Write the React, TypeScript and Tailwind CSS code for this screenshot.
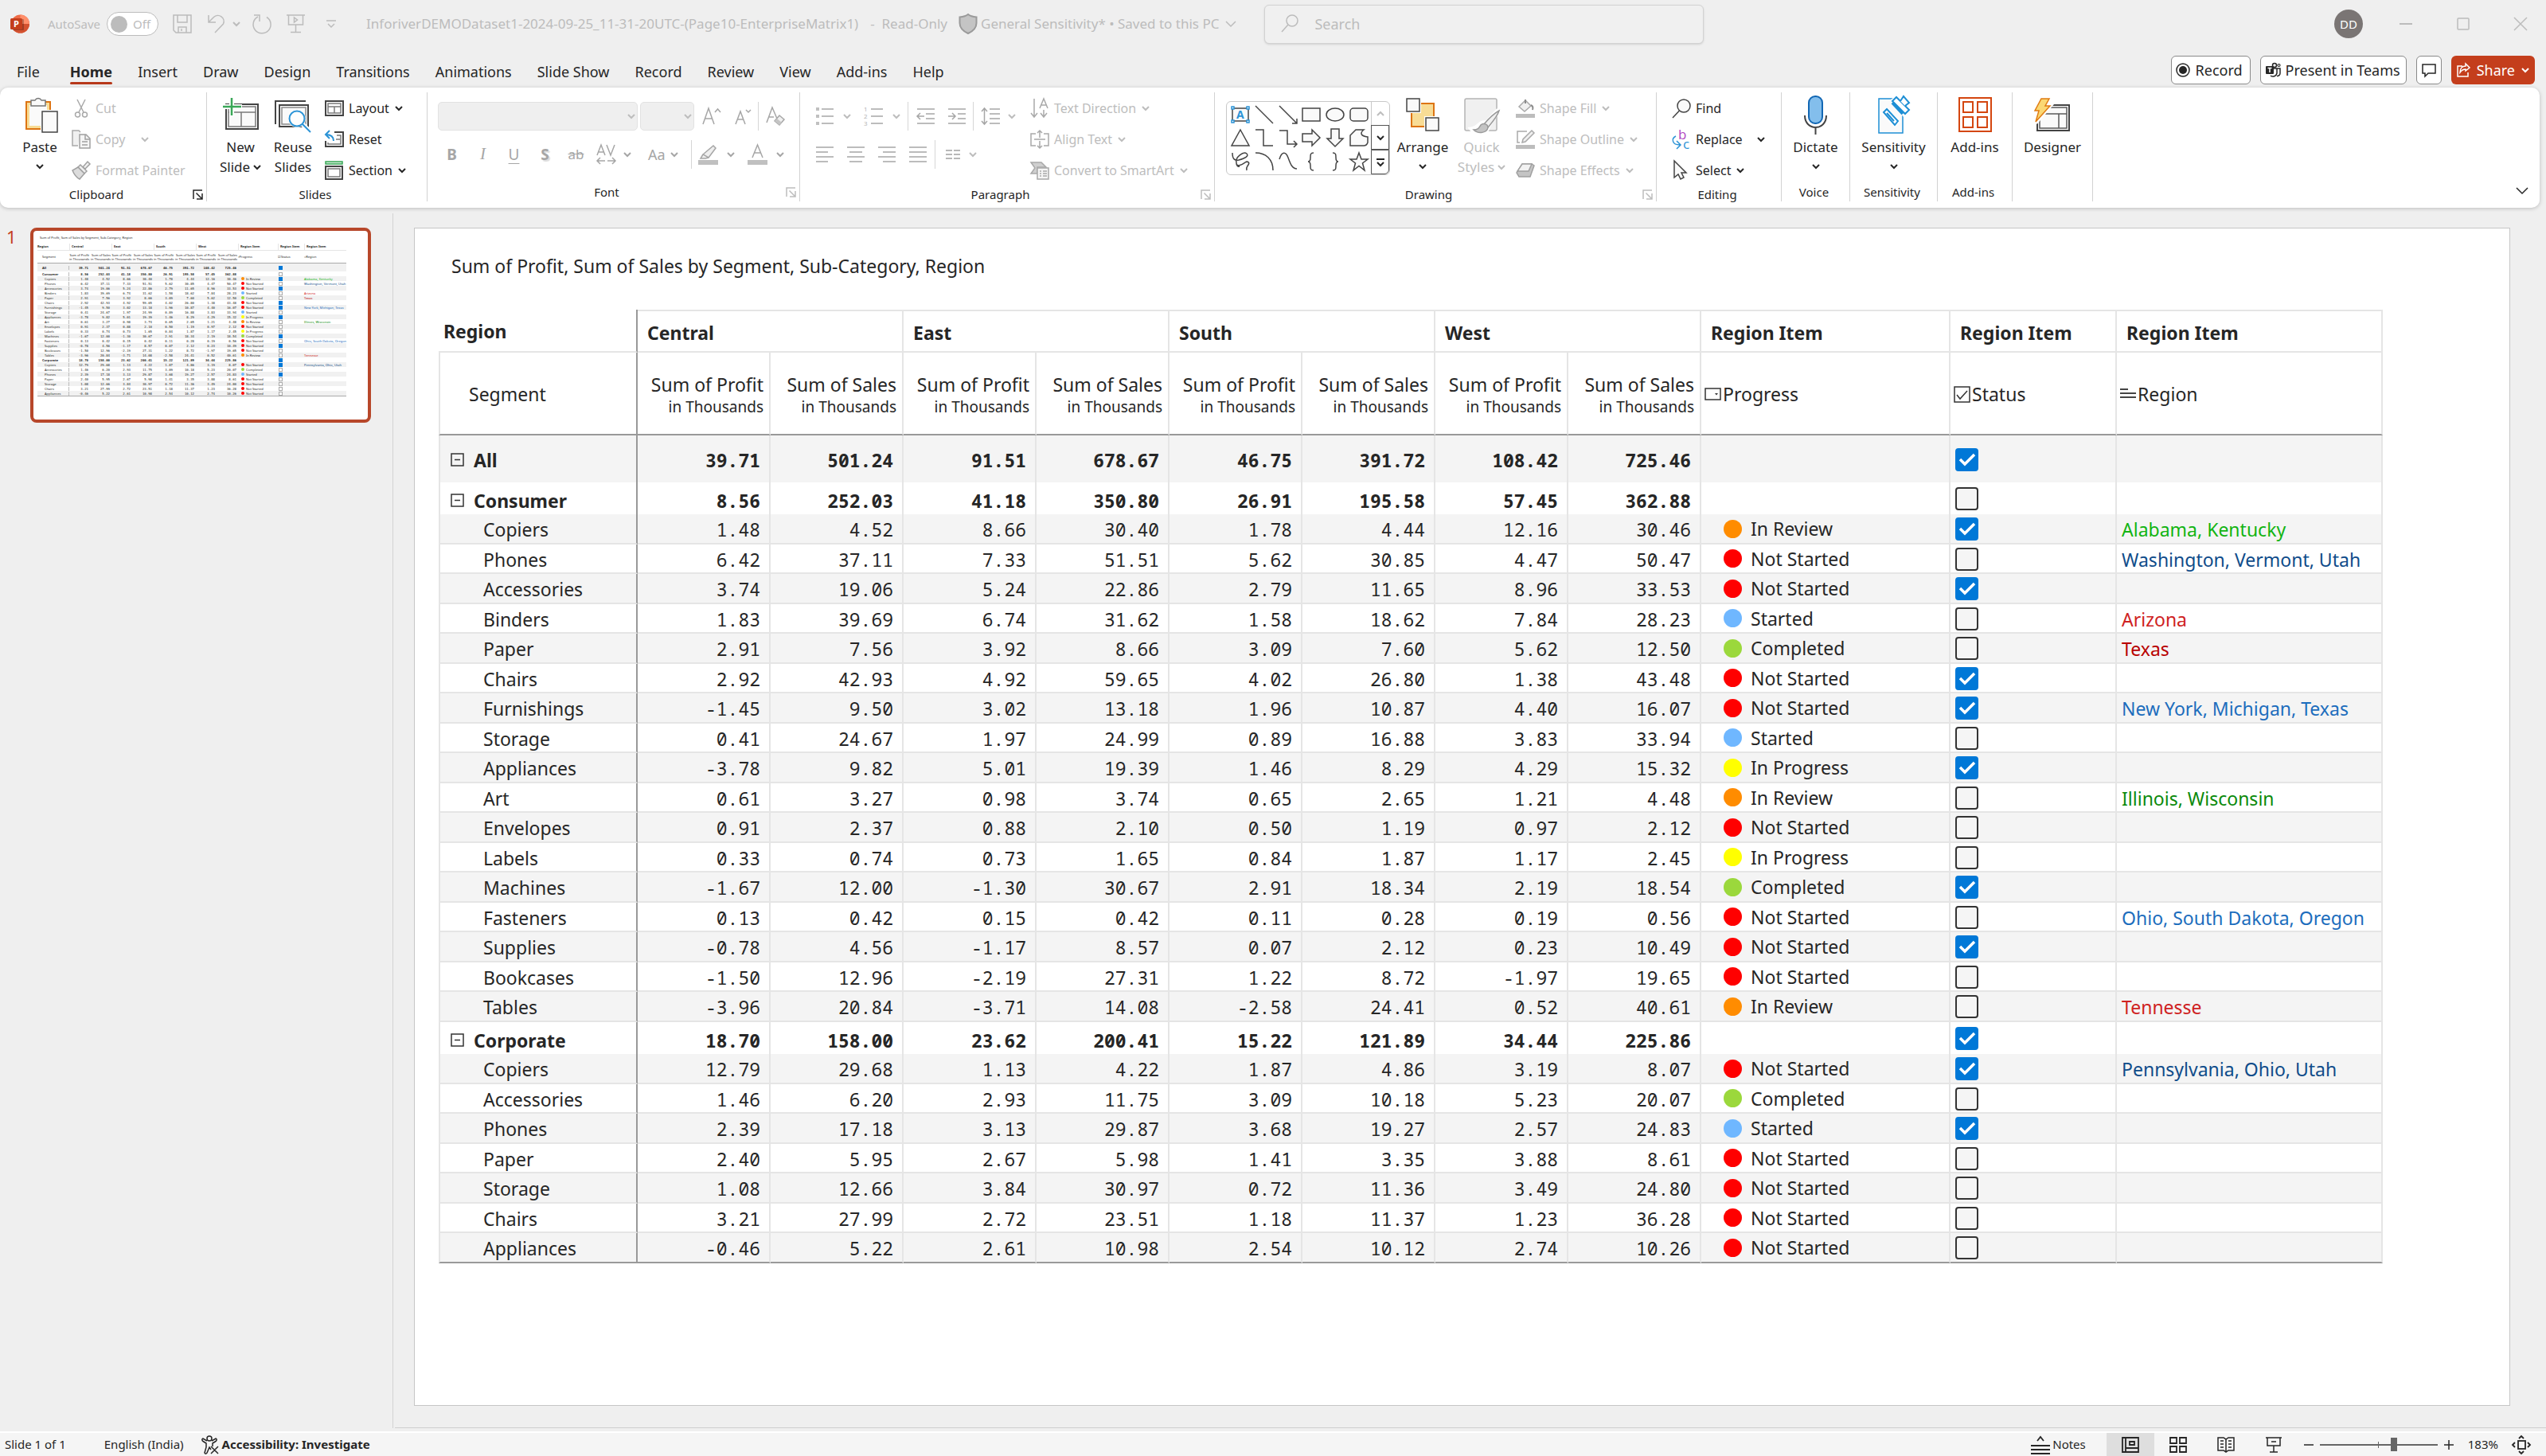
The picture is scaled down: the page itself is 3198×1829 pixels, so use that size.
import React from "react";
import type { ReactNode } from "react";

/* ---------- shared bits ---------- */

function Svg({ w, h, children, className = "" }: { w: number; h: number; children: ReactNode; className?: string }) {
  return (
    <svg width={w} height={h} viewBox={`0 0 ${w} ${h}`} fill="none" aria-hidden="true" className={`shrink-0 overflow-visible ${className}`}>
      {children}
    </svg>
  );
}

function Chevron({ className = "" }: { className?: string }) {
  return (
    <Svg w={10} h={8} className={className}>
      <path d="M1 2l4 4 4-4" stroke="currentColor" strokeWidth="2" />
    </Svg>
  );
}

/* ---------- data ---------- */

type Row = {
  name: string;
  values: string;
  level?: "total" | "group";
  progress?: "In Review" | "Not Started" | "Started" | "Completed" | "In Progress";
  done: boolean;
  region?: string;
  tone?: string;
};

const green = "text-[#12b412]";
const darkGreen = "text-[#0b8a0b]";
const navy = "text-[#0f4c8a]";
const blue = "text-[#1c6dbd]";
const red = "text-[#cf2222]";
const darkRed = "text-[#b80000]";

const totalRow: Row = { name: "All", values: "39.71 501.24 91.51 678.67 46.75 391.72 108.42 725.46", level: "total", done: true };

const groups: Row[][] = [
  [
    { name: "Consumer", values: "8.56 252.03 41.18 350.80 26.91 195.58 57.45 362.88", level: "group", done: false },
    { name: "Copiers", values: "1.48 4.52 8.66 30.40 1.78 4.44 12.16 30.46", progress: "In Review", done: true, region: "Alabama, Kentucky", tone: green },
    { name: "Phones", values: "6.42 37.11 7.33 51.51 5.62 30.85 4.47 50.47", progress: "Not Started", done: false, region: "Washington, Vermont, Utah", tone: navy },
    { name: "Accessories", values: "3.74 19.06 5.24 22.86 2.79 11.65 8.96 33.53", progress: "Not Started", done: true },
    { name: "Binders", values: "1.83 39.69 6.74 31.62 1.58 18.62 7.84 28.23", progress: "Started", done: false, region: "Arizona", tone: red },
    { name: "Paper", values: "2.91 7.56 3.92 8.66 3.09 7.60 5.62 12.50", progress: "Completed", done: false, region: "Texas", tone: darkRed },
    { name: "Chairs", values: "2.92 42.93 4.92 59.65 4.02 26.80 1.38 43.48", progress: "Not Started", done: true },
    { name: "Furnishings", values: "-1.45 9.50 3.02 13.18 1.96 10.87 4.40 16.07", progress: "Not Started", done: true, region: "New York, Michigan, Texas", tone: blue },
    { name: "Storage", values: "0.41 24.67 1.97 24.99 0.89 16.88 3.83 33.94", progress: "Started", done: false },
    { name: "Appliances", values: "-3.78 9.82 5.01 19.39 1.46 8.29 4.29 15.32", progress: "In Progress", done: true },
    { name: "Art", values: "0.61 3.27 0.98 3.74 0.65 2.65 1.21 4.48", progress: "In Review", done: false, region: "Illinois, Wisconsin", tone: darkGreen },
    { name: "Envelopes", values: "0.91 2.37 0.88 2.10 0.50 1.19 0.97 2.12", progress: "Not Started", done: false },
    { name: "Labels", values: "0.33 0.74 0.73 1.65 0.84 1.87 1.17 2.45", progress: "In Progress", done: false },
    { name: "Machines", values: "-1.67 12.00 -1.30 30.67 2.91 18.34 2.19 18.54", progress: "Completed", done: true },
    { name: "Fasteners", values: "0.13 0.42 0.15 0.42 0.11 0.28 0.19 0.56", progress: "Not Started", done: false, region: "Ohio, South Dakota, Oregon", tone: blue },
    { name: "Supplies", values: "-0.78 4.56 -1.17 8.57 0.07 2.12 0.23 10.49", progress: "Not Started", done: true },
    { name: "Bookcases", values: "-1.50 12.96 -2.19 27.31 1.22 8.72 -1.97 19.65", progress: "Not Started", done: false },
    { name: "Tables", values: "-3.96 20.84 -3.71 14.08 -2.58 24.41 0.52 40.61", progress: "In Review", done: false, region: "Tennesse", tone: red },
  ],
  [
    { name: "Corporate", values: "18.70 158.00 23.62 200.41 15.22 121.89 34.44 225.86", level: "group", done: true },
    { name: "Copiers", values: "12.79 29.68 1.13 4.22 1.87 4.86 3.19 8.07", progress: "Not Started", done: true, region: "Pennsylvania, Ohio, Utah", tone: navy },
    { name: "Accessories", values: "1.46 6.20 2.93 11.75 3.09 10.18 5.23 20.07", progress: "Completed", done: false },
    { name: "Phones", values: "2.39 17.18 3.13 29.87 3.68 19.27 2.57 24.83", progress: "Started", done: true },
    { name: "Paper", values: "2.40 5.95 2.67 5.98 1.41 3.35 3.88 8.61", progress: "Not Started", done: false },
    { name: "Storage", values: "1.08 12.66 3.84 30.97 0.72 11.36 3.49 24.80", progress: "Not Started", done: false },
    { name: "Chairs", values: "3.21 27.99 2.72 23.51 1.18 11.37 1.23 36.28", progress: "Not Started", done: false },
    { name: "Appliances", values: "-0.46 5.22 2.61 10.98 2.54 10.12 2.74 10.26", progress: "Not Started", done: false },
  ],
];

const dotColor: Record<string, string> = {
  "In Review": "bg-[#ff8c00]",
  "Not Started": "bg-[#ff0000]",
  Started: "bg-[#6fb7ff]",
  Completed: "bg-[#9bd83c]",
  "In Progress": "bg-[#ffff00]",
};

const regions = ["Central", "East", "South", "West"];
const measures = ["Sum of Profit", "Sum of Sales"];
const slideTitle = "Sum of Profit, Sum of Sales by Segment, Sub-Category, Region";

/* ---------- title bar ---------- */

function PowerPointLogo() {
  return (
    <Svg w={24} h={24}>
      <circle cx="12.500" cy="12" r="11.500" fill="#ed6c47" />
      <path d="M12.500 .5A11.500 11.500 0 0 1 24 12H12.500z" fill="#ff8f6b" />
      <path d="M1 12h23a11.500 11.500 0 0 1-23 0z" fill="#d35230" />
      <rect x="3" y="6" width="14" height="14" rx="1" fill="#000" opacity=".25" />
      <rect x="0" y="5" width="15" height="14" rx="1.500" fill="#c43e1c" />
      <text x="4" y="16" fontSize="11" fontWeight="700" fill="#fff" fontFamily="Open Sans, sans-serif">P</text>
    </Svg>
  );
}

function TitleBar() {
  return (
    <header className="flex h-[60px] shrink-0 items-center pl-[13px] text-[17px] text-[#bcbcbc]">
      <PowerPointLogo />
      <span id="autosave" className="ml-[23px] text-[15px]">AutoSave</span>
      <button type="button" role="switch" aria-checked="false" aria-labelledby="autosave" className="ml-2 flex h-[30px] w-[65px] items-center gap-[7px] rounded-full border border-[#bcbcbc] bg-white pl-1 text-[15px]">
        <span className="size-[21px] rounded-full bg-[#bcbcbc]" />
        Off
      </button>
      <button type="button" aria-label="Save" className="ml-[18px]">
        <Svg w={24} h={24}><path d="M1 1h22v22H4l-3-3zM6 1v9h12V1M7 23v-7h10v7M11 18v3" stroke="currentColor" strokeWidth="1.500" /></Svg>
      </button>
      <button type="button" aria-label="Undo" className="ml-5">
        <Svg w={23} h={24}><path d="M1 1v9h9M1.500 9.500l6-6a7.500 7.500 0 0 1 12 8.500L9 23" stroke="currentColor" strokeWidth="1.500" /></Svg>
      </button>
      <button type="button" aria-label="Undo history" className="ml-2"><Chevron /></button>
      <button type="button" aria-label="Redo" className="ml-[15px]">
        <Svg w={25} h={24}><path d="M2 1h7v8M7 3a11 11 0 1 0 11 .5" stroke="currentColor" strokeWidth="1.500" /></Svg>
      </button>
      <button type="button" aria-label="Start from beginning" className="ml-[18px]">
        <Svg w={23} h={24}><path d="M0 1h23M2.500 1v12h18V1M11.500 13v9M5 22.500h13M9.500 4v6l4-3z" stroke="currentColor" strokeWidth="1.500" /></Svg>
      </button>
      <button type="button" aria-label="Customize toolbar" className="ml-[27px]">
        <Svg w={12} h={12}><path d="M0 2h12M2 6l4 4 4-4" stroke="currentColor" strokeWidth="1.500" /></Svg>
      </button>
      <span className="ml-[38px] whitespace-nowrap">InforiverDEMODataset1-2024-09-25_11-31-20UTC-(Page10-EnterpriseMatrix1)</span>
      <span className="ml-[15px] whitespace-pre">-  Read-Only</span>
      <Svg w={24} h={26} className="ml-[14px]">
        <path d="M12 1c3 2.500 6 3 10.500 3.500V12c0 6-4 10-10.500 13C5.500 22 1.500 18 1.500 12V4.500C6 4 9 3.500 12 1z" fill="#c4c4c4" stroke="#9a9a9a" strokeWidth="2" />
      </Svg>
      <span className="ml-1">General Sensitivity* • Saved to this PC</span>
      <button type="button" aria-label="File status" className="ml-2">
        <Svg w={14} h={10}><path d="M1 2l6 6 6-6" stroke="currentColor" strokeWidth="1.500" /></Svg>
      </button>
      <label className="ml-[35px] flex h-[49px] w-[552px] items-center gap-5 rounded-md border border-[#d2d2d2] bg-[#f0f0f0] pl-5 shadow-sm">
        <Svg w={22} h={24}><circle cx="14" cy="8" r="7" stroke="currentColor" strokeWidth="1.500" /><path d="M9 13L1 22" stroke="currentColor" strokeWidth="1.500" /></Svg>
        <input type="search" aria-label="Search" placeholder="Search" className="h-8 min-w-0 flex-1 bg-transparent text-[18px] outline-none placeholder:text-[#bcbcbc]" />
      </label>
      <button type="button" aria-label="Account" className="ml-auto flex size-9 items-center justify-center rounded-full bg-[#7a7574] text-[15px] text-white">DD</button>
      <button type="button" aria-label="Minimize" className="ml-[46px]"><Svg w={16} h={16}><path d="M0 8h16" stroke="currentColor" strokeWidth="2" /></Svg></button>
      <button type="button" aria-label="Maximize" className="ml-14"><Svg w={16} h={16}><rect x="1" y="1" width="14" height="14" rx="1" stroke="currentColor" strokeWidth="1.500" /></Svg></button>
      <button type="button" aria-label="Close" className="mr-6 ml-14"><Svg w={16} h={16}><path d="M0 0l16 16M16 0L0 16" stroke="currentColor" strokeWidth="1.500" /></Svg></button>
    </header>
  );
}

/* ---------- tabs ---------- */

const tabs = ["Insert", "Draw", "Design", "Transitions", "Animations", "Slide Show", "Record", "Review", "View", "Add-ins", "Help"];

function TabBar() {
  return (
    <div className="flex h-[50px] shrink-0 items-end pr-[14px] pb-1 pl-[21px] text-[18px]">
      <nav className="flex h-9 items-center gap-8 pt-1">
        <button type="button" className="mr-[6px]">File</button>
        <button type="button" className="relative flex h-full items-center font-bold after:absolute after:inset-x-0 after:bottom-0 after:h-[3px] after:rounded-full after:bg-[#b7381a]">Home</button>
        {tabs.map((t) => <button type="button" key={t} className="whitespace-nowrap">{t}</button>)}
      </nav>
      <div className="ml-auto flex h-9 gap-3">
        <button type="button" className="flex items-center gap-[7px] rounded-md border border-[#8a8a8a] bg-white px-[5px] pr-[9px]">
          <Svg w={18} h={18}><circle cx="9" cy="9" r="8" stroke="#262626" strokeWidth="1.500" /><circle cx="9" cy="9" r="5" fill="#262626" /></Svg>
          Record
        </button>
        <button type="button" className="flex items-center gap-[6px] rounded-md border border-[#8a8a8a] bg-white px-[6px] pr-[7px]">
          <Svg w={19} h={20}>
            <circle cx="11" cy="4" r="2.500" stroke="#262626" strokeWidth="1.500" /><circle cx="16.500" cy="4" r="1.500" stroke="#262626" strokeWidth="1.200" />
            <path d="M10 8h8v6a3.500 3.500 0 0 1-4 3.500M14 8v6a5 5 0 0 1-8 3" stroke="#262626" strokeWidth="1.500" />
            <rect y="5" width="10" height="10" rx="1" fill="#262626" /><path d="M2.500 7.500h5M5 7.500V13" stroke="#fff" strokeWidth="1.500" />
          </Svg>
          Present in Teams
        </button>
        <button type="button" aria-label="Comments" className="flex w-8 items-center justify-center rounded-md border border-[#8a8a8a] bg-white">
          <Svg w={18} h={18}><path d="M1 2h16v11H8l-4 4v-4H1z" stroke="#262626" strokeWidth="1.500" /></Svg>
        </button>
        <button type="button" className="flex items-center gap-2 rounded-md bg-[#c43e1c] px-[7px] text-white">
          <Svg w={17} h={18}><path d="M7 4H1v13h13v-5M11 1l5 5-5 4V8C8 8 6 9 4 12c0-5 3-8 7-8z" stroke="#fff" strokeWidth="1.500" /></Svg>
          Share
          <Chevron />
        </button>
      </div>
    </div>
  );
}

/* ---------- ribbon ---------- */

const off = "text-[#bdbdbd]";

function Group({ label, launcher, launcherOn, className, children }: { label: string; launcher?: boolean; launcherOn?: boolean; className: string; children: ReactNode }) {
  return (
    <section className={`mt-[6px] mb-2 flex shrink-0 flex-col border-r border-[#d2d2d2] ${className}`}>
      <div className="flex h-[118px] items-start">{children}</div>
      <div className="flex h-6 items-center pr-1 text-[15px]">
        <h2 className="flex-1 text-center">{label}</h2>
        {launcher && (
          <button type="button" aria-label={`${label} options`} className={launcherOn ? "" : off}>
            <Svg w={13} h={13}><path d="M1 12V1h11M4.500 4.500l7 7M12 5v7H5" stroke="currentColor" strokeWidth="1.500" /></Svg>
          </button>
        )}
      </div>
    </section>
  );
}

function Big({ icon, lines, chevron, muted, className = "" }: { icon: ReactNode; lines: string[]; chevron?: "inline" | "below"; muted?: boolean; className?: string }) {
  return (
    <button type="button" className={`flex shrink-0 flex-col items-center text-[17px] leading-[25px] ${muted ? off : ""} ${className}`}>
      <span className="flex h-[56px] items-center justify-center">{icon}</span>
      {lines.map((l, i) => (
        <span key={l} className="flex items-center gap-1 whitespace-nowrap">
          {l}
          {chevron === "inline" && i === lines.length - 1 && <Chevron />}
        </span>
      ))}
      {chevron === "below" && <span className="flex h-6 items-center"><Chevron /></span>}
    </button>
  );
}

function Small({ icon, label, chevron, muted }: { icon: ReactNode; label: string; chevron?: boolean; muted?: boolean }) {
  return (
    <button type="button" className={`flex h-[39px] items-center gap-1 whitespace-nowrap text-[16px] ${muted ? off : ""}`}>
      <span className="flex w-[26px] justify-start">{icon}</span>
      <span>{label}</span>
      {chevron && <Chevron className="ml-[3px]" />}
    </button>
  );
}

function Tool({ label, className, children }: { label: string; className?: string; children: ReactNode }) {
  return <button type="button" aria-label={label} className={`flex h-9 shrink-0 items-center justify-center ${className ?? ""}`}>{children}</button>;
}

const Rule = ({ className = "" }: { className?: string }) => <span className={`h-9 w-px shrink-0 bg-[#d6d6d6] ${className}`} />;

function Lines({ rows }: { rows: [number, number][] }) {
  return (
    <Svg w={24} h={22}>
      {rows.map(([x, w], i) => <path key={i} d={`M${x} ${2 + i * 6}h${w}`} stroke="#a6a6a6" strokeWidth="1.500" />)}
    </Svg>
  );
}

function ClipboardGroup() {
  return (
    <Group label="Clipboard" launcher launcherOn className="w-[260px]">
      <Big
        className="ml-5 w-[60px]"
        lines={["Paste"]}
        chevron="below"
        icon={
          <Svg w={42} h={48} className="ml-1">
            <rect x="2" y="8" width="30" height="34" fill="#f8dc95" stroke="#dd7413" strokeWidth="2" />
            <rect x="6" y="12" width="22" height="26" fill="#fafafa" />
            <path d="M8 13V6h5a4.500 4.500 0 0 1 8 0h5v7z" fill="#fafafa" stroke="#767676" strokeWidth="1.500" />
            <rect x="20" y="18" width="22" height="30" fill="#fff" />
            <rect x="22" y="20" width="19" height="26" fill="#fafafa" stroke="#444" strokeWidth="1.500" />
          </Svg>
        }
      />
      <div className="ml-[10px]">
        <Small muted label="Cut" icon={<Svg w={24} h={24}><path d="M7 1l8 16M17 1L9 17" stroke="#a9a9a9" strokeWidth="1.500" /><circle cx="7.500" cy="20" r="3" stroke="#a9a9a9" strokeWidth="1.500" /><circle cx="16.500" cy="20" r="3" stroke="#a9a9a9" strokeWidth="1.500" /></Svg>} />
        <div className="flex">
          <Small muted label="Copy" icon={<Svg w={24} h={24}><path d="M8 20H1V1h8l2 2" fill="#f0f0f0" stroke="#a9a9a9" strokeWidth="1.500" /><path d="M10 6h8l5 5v12H10z" fill="#f5f5f5" stroke="#a0a0a0" strokeWidth="1.500" /><path d="M17 6v6h6M13 15h7M13 19h7" stroke="#a0a0a0" strokeWidth="1.500" /></Svg>} />
          <button type="button" aria-label="Copy options" className={`ml-5 ${off}`}><Chevron /></button>
        </div>
        <Small muted label="Format Painter" icon={<Svg w={24} h={24}><path d="M14 8l6-7 3 3-6 6z" fill="#f0f0f0" stroke="#a0a0a0" strokeWidth="1.500" /><path d="M11 5l8 8-3 3-8-8z" fill="#eee" stroke="#a0a0a0" strokeWidth="1.500" /><path d="M8 8l8 8-6 7C6 21 3 17 1 12z" fill="#dcdcdc" stroke="#a0a0a0" strokeWidth="1.500" /></Svg>} />
      </div>
    </Group>
  );
}

function SlidesGroup() {
  return (
    <Group label="Slides" className="w-[277px]">
      <Big
        className="ml-[12px] w-[60px]"
        lines={["New", "Slide"]}
        chevron="inline"
        icon={
          <Svg w={45} h={44}>
            <rect x="4" y="9" width="40" height="31" fill="#fafafa" stroke="#444" strokeWidth="2" />
            <path d="M7 12h34v25H7zM7 19h34M23 19v18" stroke="#7a7a7a" strokeWidth="1.500" />
            <path d="M11 0v24M0 12h24" stroke="#fff" strokeWidth="6" />
            <path d="M11 1v22M0 12h23" stroke="#3aa757" strokeWidth="2.500" />
          </Svg>
        }
      />
      <Big
        className="ml-[6px] w-[60px]"
        lines={["Reuse", "Slides"]}
        icon={
          <Svg w={46} h={44}>
            <path d="M1 34V5h38" stroke="#444" strokeWidth="2" />
            <rect x="6" y="10" width="36" height="27" fill="#fafafa" stroke="#444" strokeWidth="2" />
            <rect x="9" y="13" width="30" height="21" stroke="#8a8a8a" strokeWidth="1.500" />
            <path d="M34 33l11 11" stroke="#fff" strokeWidth="6" />
            <circle cx="28" cy="27" r="11" fill="#fff" /><circle cx="28" cy="27" r="9.500" fill="#fdfdfd" stroke="#2b93d6" strokeWidth="2" />
            <path d="M35 34l10 10" stroke="#2b93d6" strokeWidth="2" />
          </Svg>
        }
      />
      <div className="ml-[10px]">
        <Small label="Layout" chevron icon={<Svg w={24} h={20}><rect x="1" y="1" width="22" height="18" stroke="#444" strokeWidth="2" /><path d="M4 4h16v12H4zM4 8h16M12 8v8" stroke="#7a7a7a" strokeWidth="1.500" /></Svg>} />
        <Small label="Reset" icon={<Svg w={24} h={22}><path d="M12 2h11v18H1V13" stroke="#444" strokeWidth="2" /><path d="M15 6h5v11H4v-2M14 11h5" stroke="#7a7a7a" strokeWidth="1.500" /><path d="M6 0L1 5l5 5M1 5c6 0 10 2 10 8" stroke="#2b93d6" strokeWidth="2" /></Svg>} />
        <Small label="Section" chevron icon={<Svg w={24} h={24}><rect x="1" y="1" width="21" height="3" fill="#c8ecd1" stroke="#3aa757" strokeWidth="1.500" /><rect x="1" y="7" width="21" height="16" stroke="#444" strokeWidth="2" /><rect x="4" y="10" width="15" height="10" stroke="#7a7a7a" strokeWidth="1.500" /></Svg>} />
      </div>
    </Group>
  );
}

function FontGroup() {
  return (
    <Group label="Font" launcher className="w-[468px]">
      <div className={`ml-[11px] flex flex-col gap-3 pt-3 ${off}`}>
        <div className="flex items-center">
          <div className="relative ml-[2px] h-9 w-[251px]">
            <select aria-label="Font" disabled className="size-full appearance-none rounded-[5px] border border-[#e2e2e2] bg-[#efefef]" />
            <Chevron className="pointer-events-none absolute top-[14px] right-[3px]" />
          </div>
          <div className="relative ml-[3px] h-9 w-[68px]">
            <select aria-label="Font size" disabled className="size-full appearance-none rounded-[5px] border border-[#e2e2e2] bg-[#efefef]" />
            <Chevron className="pointer-events-none absolute top-[14px] right-[3px]" />
          </div>
          <Tool label="Increase font size" className="ml-[10px]"><Svg w={24} h={24}><path d="M1 22L8 2l7 20M4 15h8M16 7l3.500-4L23 7" stroke="#a6a6a6" strokeWidth="1.500" /></Svg></Tool>
          <Tool label="Decrease font size" className="ml-[17px]"><Svg w={22} h={24}><path d="M1 22L7 6l6 16M3.500 16h7M14 4l3 3 3-3" stroke="#a6a6a6" strokeWidth="1.500" /></Svg></Tool>
          <Rule className="ml-[7px]" />
          <Tool label="Clear formatting" className="ml-[9px]"><Svg w={26} h={26}><path d="M1 21L8 2l6 14M4 14h6" stroke="#a6a6a6" strokeWidth="1.500" /><path d="M17 12l6 5-6 7-6-5z" fill="#f0f0f0" stroke="#a6a6a6" strokeWidth="1.500" /><path d="M11 19l6 5 3-3-6-5z" fill="#c4c4c4" /></Svg></Tool>
        </div>
        <div className="flex items-center text-[19px] text-[#a6a6a6]">
          <Tool label="Bold" className="w-[39px] font-bold">B</Tool>
          <Tool label="Italic" className="w-[39px]"><span className="font-['Liberation_Serif',serif] text-[21px] italic">I</span></Tool>
          <Tool label="Underline" className="w-[39px]"><span className="underline underline-offset-4">U</span></Tool>
          <Tool label="Shadow" className="w-[39px] font-bold"><span className="[text-shadow:2px_2px_1px_#ddd]">S</span></Tool>
          <Tool label="Strikethrough" className="w-[39px] text-[17px]"><span className="line-through">ab</span></Tool>
          <Tool label="Character spacing" className="ml-[6px]"><Svg w={26} h={26}><path d="M1 14L6 1l5 13M3 10h6M13 1l5 13 5-13M1 21h10M14 21h10M5 17l-4 4 4 4M20 17l4 4-4 4" stroke="#a6a6a6" strokeWidth="1.500" /></Svg><Chevron className="ml-2" /></Tool>
          <Tool label="Change case" className="ml-[21px] text-[18px]">Aa<Chevron className="ml-[6px]" /></Tool>
          <Rule className="ml-4" />
          <Tool label="Text highlight" className="ml-2"><Svg w={25} h={26}><path d="M6 13L19 2l3 3-9 12zM6 13l-3 5h6l4-1" fill="#eee" stroke="#a6a6a6" strokeWidth="1.500" /><rect y="20" width="25" height="6" fill="#c0c0c0" /></Svg><Chevron className="ml-[11px]" /></Tool>
          <Tool label="Font colour" className="ml-[16px]"><Svg w={25} h={26}><path d="M6 17l6.500-16L19 17M8 11h9" stroke="#a6a6a6" strokeWidth="1.500" /><rect y="20" width="25" height="6" fill="#c0c0c0" /></Svg><Chevron className="ml-[11px]" /></Tool>
        </div>
      </div>
    </Group>
  );
}

function ParagraphGroup() {
  return (
    <Group label="Paragraph" launcher className="w-[521px]">
      <div className={`ml-[19px] flex w-[252px] flex-col gap-3 pt-3 ${off}`}>
        <div className="flex items-center">
          <Tool label="Bullets"><Svg w={24} h={24}><path d="M8 3h15M8 12h15M8 21h15" stroke="#a6a6a6" strokeWidth="1.500" /><path d="M1 3h4M1 12h4M1 21h4" stroke="#c0c0c0" strokeWidth="4" /></Svg><Chevron className="ml-[11px]" /></Tool>
          <Tool label="Numbering" className="ml-[16px]"><Svg w={24} h={26}><path d="M9 4h15M9 13h15M9 22h15" stroke="#a6a6a6" strokeWidth="1.500" /><g fill="#b0b0b0" fontSize="8" fontFamily="Open Sans, sans-serif"><text x="0" y="7">1</text><text x="0" y="16">2</text><text x="0" y="25">3</text></g></Svg><Chevron className="ml-[12px]" /></Tool>
          <Rule className="ml-[9px]" />
          <Tool label="Decrease indent" className="ml-[10px]"><Svg w={24} h={22}><path d="M1 2h22M12 8h11M12 14h11M1 20h22M10 11H2M5 7l-4 4 4 4" stroke="#a6a6a6" strokeWidth="1.500" /></Svg></Tool>
          <Tool label="Increase indent" className="ml-[15px]"><Svg w={24} h={22}><path d="M1 2h22M13 8h10M13 14h10M1 20h22M1 11h8M6 7l4 4-4 4" stroke="#a6a6a6" strokeWidth="1.500" /></Svg></Tool>
          <Rule className="ml-2" />
          <Tool label="Line spacing" className="ml-[9px]"><Svg w={25} h={22}><path d="M11 2h13M11 8h13M11 14h13M11 20h13M4.500 1v20M1 5l3.500-4L8 5M1 17l3.500 4L8 17" stroke="#a6a6a6" strokeWidth="1.500" /></Svg><Chevron className="ml-[9px]" /></Tool>
        </div>
        <div className="flex items-center">
          <Tool label="Align left"><Lines rows={[[1, 22], [1, 15], [1, 22], [1, 15]]} /></Tool>
          <Tool label="Center" className="ml-[15px]"><Lines rows={[[1, 22], [4, 16], [1, 22], [4, 16]]} /></Tool>
          <Tool label="Align right" className="ml-[15px]"><Lines rows={[[1, 22], [7, 16], [1, 22], [7, 16]]} /></Tool>
          <Tool label="Justify" className="ml-[15px]"><Lines rows={[[1, 22], [1, 22], [1, 22], [1, 22]]} /></Tool>
          <Rule className="ml-[9px]" />
          <Tool label="Columns" className="ml-3"><Svg w={20} h={14}><path d="M1 2h8M11 2h8M1 7h8M11 7h8M1 12h8M11 12h8" stroke="#b8b8b8" strokeWidth="2" /></Svg><Chevron className="ml-[10px]" /></Tool>
        </div>
      </div>
      <div className="ml-[18px]">
        <Small muted chevron label="Text Direction" icon={<Svg w={24} h={24}><path d="M5 0v22M1 18l4 5 4-5M17 14v8M13 18l4 5 4-5M12 12l5-12 5 12M14 8h6" stroke="#a9a9a9" strokeWidth="1.500" /></Svg>} />
        <Small muted chevron label="Align Text" icon={<Svg w={24} h={24}><path d="M7 5H1v15h6M17 5h6v15h-6M5 12h14M12 1v9M9 4l3-3 3 3M12 14v9M9 20l3 3 3-3" stroke="#a9a9a9" strokeWidth="1.500" /></Svg>} />
        <Small muted chevron label="Convert to SmartArt" icon={<Svg w={24} h={24}><path d="M1 2h13l6 6H9v8H1l5-7z" fill="#cfcfcf" stroke="#a9a9a9" strokeWidth="1.500" /><rect x="9" y="9" width="14" height="14" fill="#f5f5f5" stroke="#a9a9a9" strokeWidth="1.500" /><path d="M12 13h2M16 13h5M12 16h2M16 16h5M12 19h2M16 19h5" stroke="#a9a9a9" strokeWidth="1.500" /></Svg>} />
      </div>
    </Group>
  );
}

const shapes: [string, ReactNode][] = [
  ["Text box", <><rect x="2" y="4" width="20" height="16" /><g fill="#fff" stroke="#2b93d6"><rect x="1" y="2" width="3" height="3" /><rect x="20" y="2" width="3" height="3" /><rect x="1" y="19" width="3" height="3" /><rect x="20" y="19" width="3" height="3" /></g><text x="7" y="17" fontSize="14" fontWeight="700" fill="#2b93d6" stroke="none" fontFamily="Open Sans, sans-serif">A</text></>],
  ["Line", <path d="M1 1l22 22" />],
  ["Arrow", <path d="M1 1l22 22M23 17v6h-6" fill="none" />],
  ["Rectangle", <rect x="1" y="4" width="22" height="16" />],
  ["Oval", <ellipse cx="12" cy="12" rx="11" ry="8" />],
  ["Rounded rectangle", <rect x="1" y="4" width="22" height="16" rx="4" />],
  ["Triangle", <path d="M12 2L23 22H1z" />],
  ["Elbow", <path d="M1 2h10v20h12" fill="none" />],
  ["Elbow arrow", <path d="M1 3h10v17h12M19 16l4 4-4 4" fill="none" />],
  ["Right arrow", <path d="M1 7h12V2l10 10-10 10v-5H1z" />],
  ["Down arrow", <path d="M7 1h10v12h5L12 23 2 13h5z" />],
  ["Freeform", <path d="M1 22V9l7-7h10c-5 4-4 8 5 9v7c-1 3-3 4-5 4z" />],
  ["Scribble", <path d="M2 1c0 8 3 10 8 9 8-2 13-5 10-8-4-3-15 4-13 12 1 6 8 1 11-1s6 0 4 3-3 3-2 7M7 14c0 3 2 5 4 4" fill="none" />],
  ["Arc", <path d="M1 1c13 0 22 8 22 22" fill="none" />],
  ["Curve", <path d="M1 9C4-1 9-1 12 7s5 14 11 14" fill="none" />],
  ["Left brace", <path d="M15 1c-4 0-4 2-4 6 0 3-1 5-3 5 2 0 3 2 3 5 0 4 0 6 4 6" fill="none" />],
  ["Right brace", <path d="M9 1c4 0 4 2 4 6 0 3 1 5 3 5-2 0-3 2-3 5 0 4 0 6-4 6" fill="none" />],
  ["Star", <path d="M12 1l3 8h8l-6.500 5 2.500 9-7-5.500L5 23l2.500-9L1 9h8z" />],
];

function DrawingGroup() {
  return (
    <Group label="Drawing" launcher className="w-[555px]">
      <div className="mt-[11px] ml-[14px] flex h-[93px] w-[206px] rounded-md border border-[#c8c8c8]">
        <div className="grid flex-1 grid-cols-6 grid-rows-3 items-center justify-items-center py-px pl-[2px]">
          {shapes.map(([name, art]) => (
            <button type="button" key={name} aria-label={name}>
              <Svg w={24} h={24}><g stroke="#444" strokeWidth="1.500" fill="#fafafa">{art}</g></Svg>
            </button>
          ))}
        </div>
        <div className="flex w-[23px] flex-col">
          <button type="button" aria-label="Scroll up" className={`flex flex-1 items-center justify-center border-l border-[#c8c8c8] ${off}`}><Chevron className="rotate-180" /></button>
          <button type="button" aria-label="Scroll down" className="flex flex-1 items-center justify-center border border-[#555]"><Chevron /></button>
          <button type="button" aria-label="More shapes" className="flex flex-1 items-center justify-center rounded-br-md border border-[#555]"><Svg w={12} h={12}><path d="M1 2h10M2 6l4 4 4-4" stroke="#262626" strokeWidth="2" /></Svg></button>
        </div>
      </div>
      <Big
        className="ml-[7px] w-[68px]"
        lines={["Arrange"]}
        chevron="below"
        icon={
          <Svg w={42} h={42}>
            <rect x="7" y="7" width="28" height="29" fill="#f8dc95" stroke="#dd7413" strokeWidth="2" />
            <rect x="0" y="0" width="19" height="19" fill="#fff" /><rect x="23" y="23" width="19" height="19" fill="#fff" />
            <rect x="1" y="1" width="16" height="16" fill="#fafafa" stroke="#444" strokeWidth="1.500" /><rect x="25" y="25" width="16" height="16" fill="#fafafa" stroke="#444" strokeWidth="1.500" />
          </Svg>
        }
      />
      <Big
        className="ml-[8px] w-[64px]"
        muted
        lines={["Quick", "Styles"]}
        chevron="inline"
        icon={
          <Svg w={46} h={46}>
            <rect x="2" y="3" width="40" height="40" rx="2" fill="#f0f0f0" stroke="#b4b4b4" strokeWidth="1.500" />
            <path d="M44 17L28 34M45 17L31 38M10 41c10-1 10-10 18-8 6 3 4 12-6 13-5 0-9-1-12-5z" stroke="#fff" strokeWidth="5" fill="#fff" />
            <path d="M45 18C38 22 31 29 26 35l5 4c5-6 12-14 14-21z" fill="#f0f0f0" stroke="#9a9a9a" strokeWidth="1.500" />
            <path d="M13 42c6 0 7-3 9-6 3-3 9-1 9 3-1 7-12 9-18 3z" fill="#c4c4c4" stroke="#9a9a9a" strokeWidth="1.500" />
          </Svg>
        }
      />
      <div className="ml-[11px]">
        <Small muted chevron label="Shape Fill" icon={<Svg w={24} h={24}><path d="M12 2l7 7-8 7-7-6z" fill="#f0f0f0" stroke="#a9a9a9" strokeWidth="1.500" /><path d="M12 6V1M19 8c2 1 3 3 2 6" stroke="#8c8c8c" strokeWidth="2" /><rect y="19" width="24" height="5" fill="#bdbdbd" /></Svg>} />
        <Small muted chevron label="Shape Outline" icon={<Svg w={24} h={24}><path d="M14 2H2v14h3" stroke="#a9a9a9" strokeWidth="1.500" /><path d="M20 1l3 3-11 11-4 1 1-4z" fill="#f0f0f0" stroke="#a9a9a9" strokeWidth="1.500" /><rect y="19" width="24" height="5" fill="#bdbdbd" /></Svg>} />
        <Small muted chevron label="Shape Effects" icon={<Svg w={24} h={20}><path d="M8 2h12l3 2-5 14H4l-3-5z" fill="#c4c4c4" stroke="#a0a0a0" strokeWidth="1.500" /><path d="M8 2h12l-4 9H2z" fill="#f2f2f2" stroke="#a0a0a0" strokeWidth="1.500" /></Svg>} />
      </div>
    </Group>
  );
}

function Ribbon() {
  return (
    <div className="mr-2 flex h-[151px] shrink-0 rounded-[10px] bg-white shadow-[0_1px_5px_rgba(0,0,0,0.22)]">
      <ClipboardGroup />
      <SlidesGroup />
      <FontGroup />
      <ParagraphGroup />
      <DrawingGroup />
      <Group label="Editing" className="w-[157px]">
        <div className="ml-[19px]">
          <Small label="Find" icon={<Svg w={24} h={24}><circle cx="15" cy="9" r="8" fill="#fafafa" stroke="#444" strokeWidth="1.500" /><path d="M9.500 15L1 24" stroke="#444" strokeWidth="1.500" /></Svg>} />
          <div className="flex">
            <Small label="Replace" icon={<Svg w={24} h={26}><g fontSize="17" fontFamily="Open Sans, sans-serif"><text x="8" y="13" fill="#b146c2">b</text><text x="14" y="25" fill="#2b93d6">c</text></g><path d="M5 9c-6 3-5 11 5 11M6 15l5 5-5 5" stroke="#2b93d6" strokeWidth="1.500" /></Svg>} />
            <button type="button" aria-label="Replace options" className="ml-[18px]"><Chevron /></button>
          </div>
          <Small label="Select" chevron icon={<Svg w={24} h={25}><path d="M3 1v21l5-4 3 6 4-2-3-6h6z" fill="#fafafa" stroke="#444" strokeWidth="1.500" /></Svg>} />
        </div>
      </Group>
      <Group label="Voice" className="w-[86px]">
        <Big
          className="w-full"
          lines={["Dictate"]}
          chevron="below"
          icon={<Svg w={30} h={50}><rect x="6" y="2" width="17" height="34" rx="8" fill="#83beec" stroke="#1267b4" strokeWidth="2" /><path d="M1 26c0 20 27 20 27 0M14.500 41v9" stroke="#444" strokeWidth="2" /></Svg>}
        />
      </Group>
      <Group label="Sensitivity" className="w-[110px]">
        <Big
          className="w-full"
          lines={["Sensitivity"]}
          chevron="below"
          icon={
            <Svg w={42} h={48}>
              <rect x="2" y="4" width="30" height="43" fill="#fafafa" stroke="#1e8fd5" strokeWidth="1.500" />
              <path d="M7 22l5-5 15 16-5 5zM19 6l8-6 15 17-8 8z" fill="#fff" stroke="#fff" strokeWidth="4" />
              <path d="M8 21l4-4 14 15-4 5zM12 22l9 10" fill="#fff" stroke="#1e8fd5" strokeWidth="2" />
              <path d="M19 7l5-5 16 16-5 5z" fill="#fff" stroke="#1e8fd5" strokeWidth="2" />
              <path d="M19 9l13 14" stroke="#1e8fd5" strokeWidth="4" />
              <path d="M29 7l4-6 7 8-5 4" fill="#fff" stroke="#1e8fd5" strokeWidth="2" />
            </Svg>
          }
        />
      </Group>
      <Group label="Add-ins" className="w-[94px]">
        <Big
          className="w-full"
          lines={["Add-ins"]}
          icon={
            <Svg w={42} h={44}>
              <rect x="1" y="1" width="40" height="42" fill="#fff" stroke="#d4460f" strokeWidth="2" />
              <g fill="#fff" stroke="#d4460f" strokeWidth="2"><rect x="6" y="6" width="12" height="13" /><rect x="24" y="6" width="12" height="13" /><rect x="6" y="25" width="12" height="13" /><rect x="24" y="25" width="12" height="13" /></g>
            </Svg>
          }
        />
      </Group>
      <Group label="" className="w-[101px]">
        <Big
          className="w-full"
          lines={["Designer"]}
          icon={
            <Svg w={46} h={44}>
              <rect x="4" y="10" width="40" height="32" fill="#fafafa" stroke="#444" strokeWidth="2" />
              <path d="M7 13h34v26H7zM7 21h34M31 21v18" stroke="#5a5a5a" strokeWidth="1.500" />
              <path d="M9 1h10l-5 10h6L2 32l4-15H1z" fill="#fff" stroke="#fff" strokeWidth="5" />
              <path d="M9 2h10l-5 9h6L2 31l4-14H1z" fill="#fbd873" stroke="#e07b12" strokeWidth="1.500" />
            </Svg>
          }
        />
      </Group>
      <button type="button" aria-label="Collapse ribbon" className="mt-[125px] mr-[14px] ml-auto self-start">
        <Svg w={16} h={10}><path d="M1 1l7 7 7-7" stroke="#262626" strokeWidth="1.500" /></Svg>
      </button>
    </div>
  );
}

/* ---------- slide thumbnail ---------- */

const thumbCols = "grid grid-cols-[40px_repeat(4,26px_27px)_50px_33px_53px] items-center";

function Thumbnail() {
  const all = [totalRow, ...groups.flat()];
  return (
    <div className="flex h-full flex-col pr-[6px] pl-[5px] text-[4px] leading-[5px]">
      <p className="mt-[6px] pl-[3px]">{slideTitle}</p>
      <div className="mt-[5px] w-[388px] border-b border-[#aaa]">
        <div className={thumbCols}>
          <b className="h-[8px] leading-[8px]">Region</b>
          {regions.map((r) => <b key={r} className="col-span-2 h-[8px] border-l border-[#e5e5e5] pl-[2px] leading-[8px]">{r}</b>)}
          {[0, 1, 2].map((i) => <b key={i} className="h-[8px] border-l border-[#e5e5e5] pl-[2px] leading-[8px]">Region Item</b>)}
        </div>
        <div className={`${thumbCols} h-[17px] border-y border-y-[#e5e5e5] border-b-[#aaa]`}>
          <span className="pl-[6px]">Segment</span>
          {regions.flatMap((r) => measures.map((m) => <span key={r + m} className="pr-px text-right whitespace-nowrap">{m}<br />in Thousands</span>))}
          <span>▫Progress</span><span>☑Status</span><span>=Region</span>
        </div>
        {all.map((r, i) => {
          const strong = Boolean(r.level);
          return (
            <div key={i} className={`${thumbCols} ${r.level === "total" ? "h-[10px]" : "h-[6px]"} ${strong ? "font-bold" : ""} ${i === 0 || (i > 1 && i < 19 && i % 2 === 0) || (i > 19 && i % 2 === 0) ? "bg-[#f1f1f1]" : ""}`}>
              <span className={`border-r border-[#bbb] ${strong ? "pl-[6px]" : "pl-[9px]"}`}>{r.name}</span>
              {r.values.split(" ").map((v, k) => <span key={k} className="pr-[2px] text-right font-['DejaVu_Sans_Mono',monospace]">{v}</span>)}
              <span className="flex items-center gap-[2px] pl-[4px]">{r.progress && <><i className={`size-1 rounded-full ${dotColor[r.progress]}`} />{r.progress}</>}</span>
              <span className={`ml-px size-[5px] border ${r.done ? "border-[#0078d7] bg-[#0078d7]" : "border-[#aaa] bg-white"}`} />
              <span className={`whitespace-nowrap ${r.tone ?? ""}`}>{r.region}</span>
            </div>
          );
        })}
      </div>
    </div>
  );
}

/* ---------- matrix ---------- */

const cell = "border-r-2 border-[#e5e5e5] p-0";
const mono = "font-['Noto_Sans_Mono','DejaVu_Sans_Mono',monospace]";

function Check({ label, on }: { label: string; on: boolean }) {
  return (
    <span className="relative ml-[6px] block size-[29px]">
      <input type="checkbox" aria-label={label} defaultChecked={on} className="peer block size-full appearance-none rounded-[4px] border-2 border-[#333] bg-[#f5f5f5] checked:border-[#0078d7] checked:bg-[#0078d7]" />
      <svg viewBox="0 0 29 29" aria-hidden="true" className="pointer-events-none absolute inset-0 hidden size-full peer-checked:block">
        <path d="M6 14l6 6L24 8" fill="none" stroke="#fff" strokeWidth="3.500" />
      </svg>
    </span>
  );
}

function MatrixRow({ row, shaded, parent }: { row: Row; shaded: boolean; parent?: string }) {
  const strong = Boolean(row.level);
  const height = row.level === "total" ? "h-[59px]" : row.level === "group" ? "h-10" : shaded ? "h-[38px]" : "h-[37px]";
  const line = strong ? "border-b-0" : "border-b-2 group-last/body:group-last/row:border-b-[#999]";
  const drop = row.level === "group" ? "pt-[5px]" : "pt-[2px]";
  const weight = strong ? "font-bold" : "font-normal";
  return (
    <tr className={`group/row ${height} ${shaded ? "bg-[#f4f4f4]" : ""}`}>
      <th scope="row" className={`border-x-2 border-[#e5e5e5] border-r-[#999] p-0 text-left ${line} ${drop} ${weight}`}>
        {strong ? (
          <span className="flex items-center gap-3 pl-[13px]">
            <button type="button" aria-label={`Collapse ${row.name}`}>
              <Svg w={17} h={17}><rect x="1" y="1" width="15" height="15" stroke="#333" strokeWidth="1.500" /><path d="M5 8.500h7" stroke="#333" strokeWidth="1.500" /></Svg>
            </button>
            {row.name}
          </span>
        ) : (
          <span className="block pl-[54px]">{row.name}</span>
        )}
      </th>
      {row.values.split(" ").map((v, i) => (
        <td key={i} className={`${cell} ${line} ${drop} ${weight} ${mono} pr-[11px] text-right`}>{v}</td>
      ))}
      <td className={`${cell} ${line}`}>
        {row.progress && (
          <span className="flex items-center gap-[11px] pl-[28px]">
            <span className={`size-[23px] rounded-full ${dotColor[row.progress]}`} />
            {row.progress}
          </span>
        )}
      </td>
      <td className={`${cell} ${line} pt-px`}><Check label={parent ? `${parent} ${row.name} status` : `${row.name} status`} on={row.done} /></td>
      <td className={`${cell} ${line} pt-[2px] whitespace-nowrap pl-[6px] ${row.tone ?? ""}`}>{row.region}</td>
    </tr>
  );
}

function Matrix() {
  const top = "border-t-2 border-r-2 border-b-2 border-[#e5e5e5] p-0 pt-[3px] pl-3 text-left";
  const sub = "border-r-2 border-b-2 border-[#e5e5e5] border-b-[#999] p-0 font-normal";
  return (
    <table className="w-full table-fixed border-separate border-spacing-0 text-[23px] leading-7">
      <colgroup>
        <col className="w-[250px]" />
        {regions.flatMap((r) => measures.map((m) => <col key={r + m} className="w-[167px]" />))}
        <col className="w-[313px]" />
        <col className="w-[209px]" />
        <col className="w-[334px]" />
      </colgroup>
      <thead>
        <tr className="h-[54px]">
          <th scope="col" className="border-r-2 border-b-2 border-[#e5e5e5] border-r-[#999] p-0 pt-[2px] pl-[6px] text-left">Region</th>
          {regions.map((r) => <th scope="colgroup" colSpan={2} key={r} className={top}>{r}</th>)}
          {[0, 1, 2].map((i) => <th scope="col" key={i} className={top}>Region Item</th>)}
        </tr>
        <tr className="h-[104px]">
          <th scope="col" className="border-x-2 border-b-2 border-x-[#e5e5e5] border-r-[#999] border-b-[#999] p-0 pt-[2px] pl-9 text-left font-normal">Segment</th>
          {regions.flatMap((r) => measures.map((m) => (
            <th scope="col" key={r + m} className={`${sub} pt-[6px] pr-[7px] text-right whitespace-nowrap`}>
              {m}
              <span className="block text-[19px]">in Thousands</span>
            </th>
          )))}
          <th scope="col" className={`${sub} pt-[2px] pl-1`}>
            <span className="flex items-center gap-[2px]"><Svg w={21} h={16}><rect x="1" y="1" width="19" height="14" stroke="#333" strokeWidth="1.500" /><path d="M13 7h4l-2 2.500z" fill="#333" /></Svg>Progress</span>
          </th>
          <th scope="col" className={`${sub} pt-[2px] pl-1`}>
            <span className="flex items-center gap-[2px]"><Svg w={21} h={21}><rect x="1" y="1" width="19" height="19" stroke="#333" strokeWidth="1.500" /><path d="M4 11l4 5 9-10" stroke="#333" strokeWidth="1.500" /></Svg>Status</span>
          </th>
          <th scope="col" className={`${sub} pt-[2px] pl-1`}>
            <span className="flex items-center gap-[2px]"><Svg w={20} h={16}><path d="M0 2h10M0 7h20M0 12h20" stroke="#444" strokeWidth="2" /></Svg>Region</span>
          </th>
        </tr>
      </thead>
      <tbody><MatrixRow row={totalRow} shaded /></tbody>
      {groups.map((g) => (
        <tbody key={g[0].name} className="group/body">
          {g.map((r, i) => <MatrixRow key={r.name} row={r} shaded={i % 2 === 1} parent={i ? g[0].name : undefined} />)}
        </tbody>
      ))}
    </table>
  );
}

/* ---------- status bar ---------- */

function StatusBar() {
  return (
    <footer className="flex h-[31px] shrink-0 items-center border-t-2 border-white bg-[#f5f5f5] pl-[6px] text-[15px]">
      <span>Slide 1 of 1</span>
      <button type="button" className="ml-12">English (India)</button>
      <button type="button" className="ml-[22px] flex items-center gap-1 font-bold">
        <Svg w={22} h={24}><circle cx="10" cy="4" r="3" stroke="#262626" strokeWidth="1.500" /><path d="M7 7L2 4C0 5 1 7 2 7.500L6 10v5l-2 7c1 2 2 1 3 0l3-7 2 3M13 7l5-3c2 1 1 3 0 3.500L14 10v4M12 14l9 9M21 14l-9 9" stroke="#262626" strokeWidth="1.500" /></Svg>
        Accessibility: Investigate
      </button>
      <div className="ml-auto flex h-full items-center">
        <button type="button" className="flex items-center gap-[3px]">
          <Svg w={24} h={24}><path d="M0 13h24M0 18h24M0 23h24M8 7l4-5 4 5" stroke="#262626" strokeWidth="1.800" /></Svg>
          Notes
        </button>
        <button type="button" aria-label="Normal view" className="ml-[26px] flex h-full w-[60px] items-center justify-center bg-[#dedede]">
          <Svg w={22} h={20}><path d="M1 1h20v18H1zM5 1v18M5 14h16M10 6h6v4h-6z" stroke="#262626" strokeWidth="1.800" /></Svg>
        </button>
        <button type="button" aria-label="Slide sorter" className="flex h-full w-[60px] items-center justify-center">
          <Svg w={22} h={20}><path d="M1 1h8v7H1zM13 1h8v7h-8zM1 12h8v7H1zM13 12h8v7h-8z" stroke="#262626" strokeWidth="1.800" /></Svg>
        </button>
        <button type="button" aria-label="Reading view" className="flex h-full w-[60px] items-center justify-center">
          <Svg w={22} h={22}><path d="M1 2h7l3 2 3-2h7v16h-7l-3 2-3-2H1zM11 4v16M4 6h4M4 10h4M4 14h4M14 6h4M14 10h4M14 14h4" stroke="#262626" strokeWidth="1.500" /></Svg>
        </button>
        <button type="button" aria-label="Slide show" className="flex h-full w-[60px] items-center justify-center">
          <Svg w={20} h={20}><path d="M0 1h20M2 1v10h16V1M7 6h6M10 11v8M5 19h10" stroke="#262626" strokeWidth="1.500" /></Svg>
        </button>
        <button type="button" aria-label="Zoom out" className="ml-[8px]"><Svg w={12} h={12}><path d="M0 6h12" stroke="#262626" strokeWidth="1.500" /></Svg></button>
        <span className="relative ml-2 flex h-full w-[148px] items-center">
          <span className="absolute top-[11px] left-[73px] h-2 w-px bg-[#666]" />
          <input
            type="range"
            aria-label="Zoom"
            min={0}
            max={100}
            defaultValue={64}
            className="h-[2px] w-full appearance-none bg-[#666] [&::-webkit-slider-thumb]:h-[17px] [&::-webkit-slider-thumb]:w-2 [&::-webkit-slider-thumb]:appearance-none [&::-webkit-slider-thumb]:bg-[#666]"
          />
        </span>
        <button type="button" aria-label="Zoom in" className="ml-2"><Svg w={12} h={12}><path d="M0 6h12M6 0v12" stroke="#262626" strokeWidth="1.500" /></Svg></button>
        <button type="button" className="ml-[18px]">183%</button>
        <button type="button" aria-label="Fit slide to window" className="mr-[19px] ml-[17px]">
          <Svg w={24} h={24}><rect x="8" y="7" width="9" height="10" stroke="#262626" strokeWidth="1.800" /><path d="M9 4l3-3 3 3M9 20l3 3 3-3M4 9l-3 3 3 3M20 9l3 3-3 3" stroke="#262626" strokeWidth="1.800" /></Svg>
        </button>
      </div>
    </footer>
  );
}

export default function App() {
  return (
    <div className="flex h-screen flex-col overflow-hidden bg-[#efefef] font-['Noto_Sans','Open_Sans',sans-serif] text-[#262626]">
      <TitleBar />
      <TabBar />
      <Ribbon />
      <div className="flex min-h-0 flex-1">
        <aside aria-label="Slides" className="mt-[7px] mb-1 flex w-[494px] shrink-0 items-start gap-[17px] border-r border-[#d2d2d2] pt-[18px] pl-2">
          <span className="w-[13px] text-[22px] leading-[22px] text-[#c43e1c]">1</span>
          <button type="button" aria-label="Slide 1" className="h-[245px] w-[428px] overflow-hidden rounded-[8px] border-4 border-[#b7472a] bg-white text-left">
            <Thumbnail />
          </button>
        </aside>
        <main className="mb-1 ml-[2px] flex flex-1 border-b border-[#cfcfcf] pt-[25px] pr-[46px] pb-[27px] pl-6">
          <article className="flex-1 border border-[#c6c6c6] bg-white pr-[159px] pl-[30px]">
            <h1 className="pt-[31px] pl-4 text-[23px] leading-8">{slideTitle}</h1>
            <div className="pt-[39px]"><Matrix /></div>
          </article>
        </main>
      </div>
      <StatusBar />
    </div>
  );
}
